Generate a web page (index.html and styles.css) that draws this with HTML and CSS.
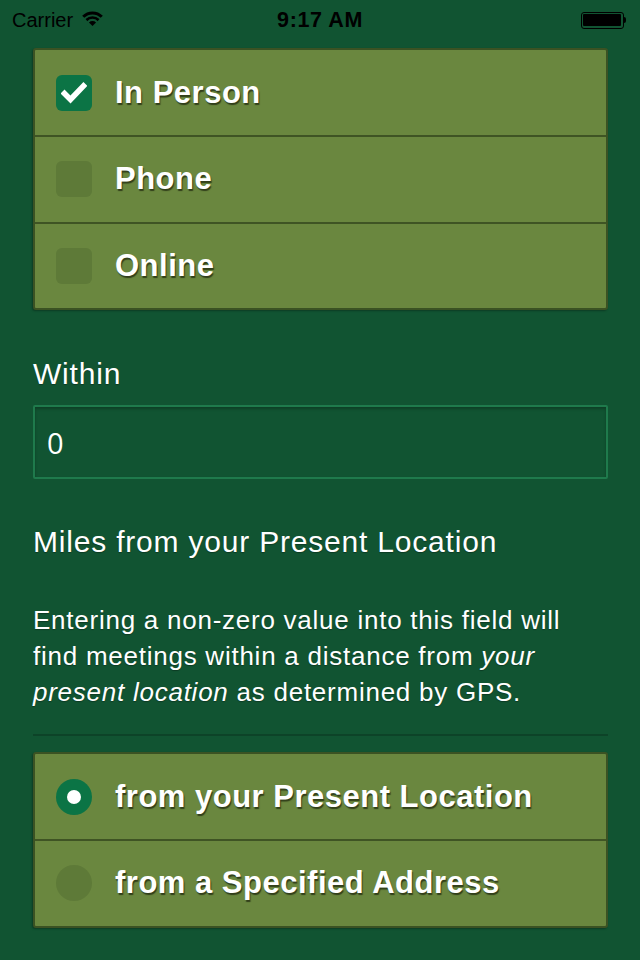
FILE: index.html
```html
<!DOCTYPE html>
<html>
<head>
<meta charset="utf-8">
<link rel="stylesheet" href="styles.css">
</head>
<body>
<div class="status">
  <div class="status-left">
    <span class="carrier">Carrier</span>
    <svg class="wifi" width="21" height="16" viewBox="-0.5 0 21 16">
      <path d="M10 15 L6.46 11.46 A5 5 0 0 1 13.54 11.46 Z" fill="#000"/>
      <path d="M3.07 8.07 A9.8 9.8 0 0 1 16.93 8.07 L15.19 10.19 A6.8 6.8 0 0 0 4.81 10.19 Z" fill="#000"/>
      <path d="M-0.32 4.68 A14.6 14.6 0 0 1 20.32 4.68 L18.2 6.8 A11.6 11.6 0 0 0 1.8 6.8 Z" fill="#000"/>
    </svg>
  </div>
  <div class="time">9:17 AM</div>
  <div class="status-right">
    <div class="battery"><div class="battery-fill"></div></div>
    <div class="battery-tip"></div>
  </div>
</div>

<main class="content">
  <div class="panel">
    <div class="row">
      <span class="check checked">
        <svg width="26" height="22" viewBox="0 0 26 22"><path d="M3.5 11.5 L9.5 17.5 L22.5 4" fill="none" stroke="#fff" stroke-width="5.5" stroke-linecap="square"/></svg>
      </span>
      <span class="label">In Person</span>
    </div>
    <div class="row">
      <span class="check"></span>
      <span class="label">Phone</span>
    </div>
    <div class="row">
      <span class="check"></span>
      <span class="label">Online</span>
    </div>
  </div>

  <div class="field-label">Within</div>
  <div class="input"><span>0</span></div>

  <div class="miles">Miles from your Present Location</div>

  <p class="help">Entering a non-zero value into this field will find meetings within a distance from <em>your present location</em> as determined by GPS.</p>

  <div class="sep"></div>

  <div class="panel">
    <div class="row">
      <span class="radio checked"><span class="dot"></span></span>
      <span class="label">from your Present Location</span>
    </div>
    <div class="row">
      <span class="radio"></span>
      <span class="label">from a Specified Address</span>
    </div>
  </div>
</main>
</body>
</html>
```
FILE: styles.css
```css
html, body {
  margin: 0;
  padding: 0;
}
body {
  width: 640px;
  height: 960px;
  background: #115432;
  font-family: "Liberation Sans", Arial, sans-serif;
  color: #fff;
  overflow: hidden;
}
.status {
  height: 40px;
  display: flex;
  align-items: center;
  justify-content: space-between;
  padding: 0 12px;
  color: #000;
  font-size: 20px;
  position: relative;
}
.status-left {
  display: flex;
  align-items: center;
  gap: 9px;
}
.wifi { margin-top: -3px; }
.time {
  position: absolute;
  left: 0;
  right: 0;
  text-align: center;
  font-weight: bold;
  font-size: 21.5px;
  letter-spacing: 0.6px;
}
.status-right {
  display: flex;
  align-items: center;
  margin-right: 2px;
}
.battery {
  width: 43px;
  height: 17px;
  border: 1.5px solid #000;
  border-radius: 3px;
  padding: 1.5px;
  box-sizing: border-box;
}
.battery-fill {
  width: 100%;
  height: 100%;
  background: #000;
  border-radius: 1px;
}
.battery-tip {
  width: 2.5px;
  height: 6px;
  background: #000;
  border-radius: 0 2px 2px 0;
}
.content {
  padding: 8px 32px 0 33px;
  display: flex;
  flex-direction: column;
}
.panel {
  background: #6a873f;
  border: 2px solid #3b5223;
  border-radius: 3px;
  box-shadow: -1px 1px 2px rgba(0,0,0,0.3);
}
.row {
  height: 84.5px;
  display: flex;
  align-items: center;
  padding-left: 21px;
  border-top: 2px solid #3f5424;
}
.row:first-child {
  border-top: none;
  height: 85px;
}
.check {
  width: 36px;
  height: 36px;
  border-radius: 6px;
  background: #5e7a38;
  display: flex;
  align-items: center;
  justify-content: center;
  flex: none;
}
.check.checked {
  background: #0b7445;
}
.radio {
  width: 36px;
  height: 36px;
  border-radius: 50%;
  background: #5e7a38;
  display: flex;
  align-items: center;
  justify-content: center;
  flex: none;
}
.radio.checked {
  background: #0b7445;
}
.dot {
  width: 14px;
  height: 14px;
  border-radius: 50%;
  background: #fff;
}
.label {
  margin-left: 23px;
  font-weight: bold;
  font-size: 31px;
  letter-spacing: 0.5px;
  color: #fff;
  text-shadow: 1px 2px 1px rgba(40,50,20,0.85);
}
.field-label {
  margin-top: 46px;
  font-size: 30px;
  letter-spacing: 0.8px;
  line-height: 36px;
  text-shadow: 0 1px 1px rgba(0,0,0,0.3);
}
.input {
  margin-top: 13px;
  height: 74px;
  box-sizing: border-box;
  border: 2px solid #1f7a4c;
  border-radius: 2px;
  background: #115432;
  box-shadow: inset 0 2px 3px rgba(0,0,0,0.25);
  display: flex;
  align-items: center;
  padding-left: 12px;
  font-family: "Open Sans", "Liberation Sans", sans-serif;
  font-size: 29px;
}
.miles {
  margin-top: 45px;
  font-size: 30px;
  letter-spacing: 0.8px;
  line-height: 36px;
  text-shadow: 0 1px 1px rgba(0,0,0,0.3);
}
.help {
  margin: 42px 0 0;
  font-size: 26px;
  letter-spacing: 0.75px;
  line-height: 36px;
  text-shadow: 0 1px 1px rgba(0,0,0,0.3);
}
.help em { font-style: italic; }
.sep {
  margin-top: 24px;
  height: 2px;
  background: #0d4328;
  margin-bottom: 16px;
}
```
